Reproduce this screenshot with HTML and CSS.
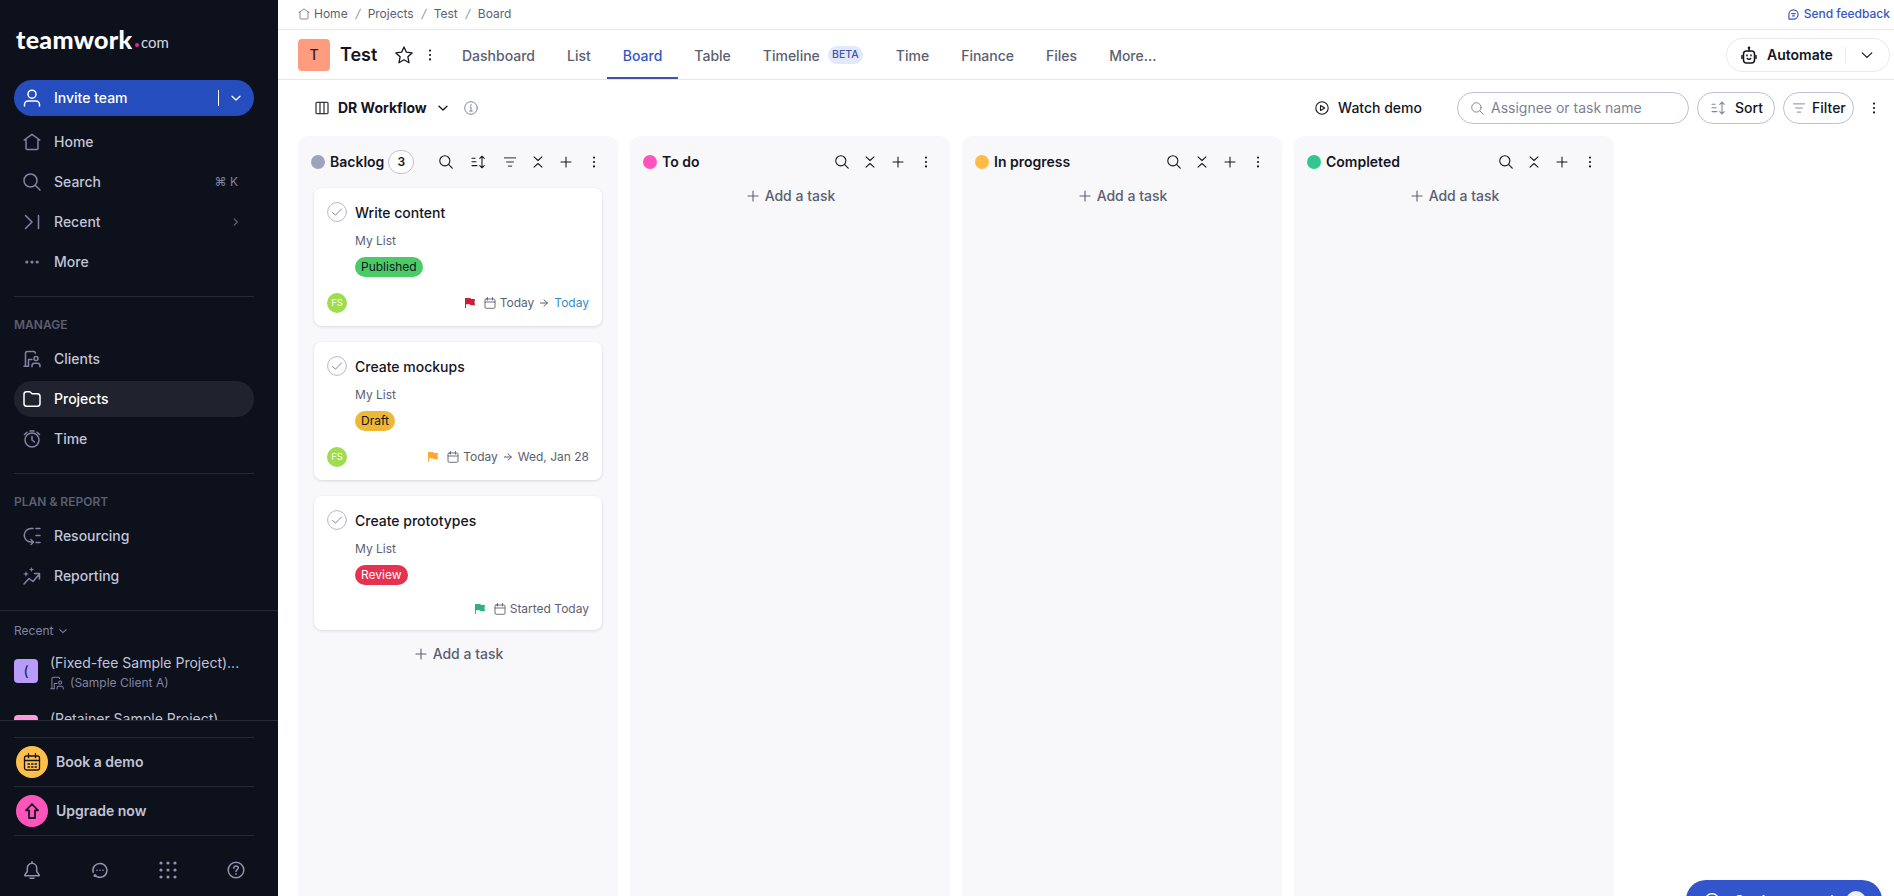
FILE: index.html
```html
<!DOCTYPE html>
<html lang="en">
<head>
<meta charset="utf-8">
<title>Test - Board</title>
<link rel="stylesheet" href="styles.css">
</head>
<body>
<svg class="sprite" aria-hidden="true">
  <symbol id="user" viewBox="0 0 18 18"><circle cx="9" cy="5.2" r="4"/><path d="M1.5 17v-1.5a3.5 3.5 0 0 1 3.5-3.500h8a3.500 3.500 0 0 1 3.500 3.500V17"/></symbol>
  <symbol id="home" viewBox="0 0 18 18"><path d="M1.200 7 9 1.300 16.800 7M3 6v9.200c0 .9.5 1.300 1.300 1.300h9.400c.8 0 1.300-.4 1.300-1.300V6"/></symbol>
  <symbol id="search" viewBox="0 0 18 18"><circle cx="7.500" cy="7.500" r="6.500"/><path d="m12.200 12.200 4.800 4.800"/></symbol>
  <symbol id="recent" viewBox="0 0 18 18"><path d="m2.500 2.500 6.500 6.500-6.500 6.500M15.500 2.500v13"/></symbol>
  <symbol id="more" viewBox="0 0 18 18"><g class="solid"><circle cx="3.800" cy="9" r="1.600"/><circle cx="9" cy="9" r="1.600"/><circle cx="14.200" cy="9" r="1.600"/></g></symbol>
  <symbol id="client" viewBox="0 0 18 18"><path d="M1 16.300h4.500V9.500h3.500M2.500 16V3.300c0-1 .8-1.800 1.800-1.800h6.200c1 0 1.800.8 1.800 1.800"/><circle cx="13" cy="8.500" r="2"/><path d="M9 16.800v-1c0-1.500 1-2.500 2.500-2.500h3c1.500 0 2.500 1 2.500 2.500v1"/></symbol>
  <symbol id="folder" viewBox="0 0 18 18"><path d="M1 4.200c0-1.500 1-2.500 2.500-2.500h2.800c.6 0 1 .2 1.300.6L9 3.700h5.200c1.600 0 2.800 1 2.800 2.600v7.200c0 1.600-1 2.800-2.700 2.800H3.700C2 16.300 1 15.200 1 13.500z"/></symbol>
  <symbol id="clock" viewBox="0 0 18 18"><circle cx="9" cy="10" r="7"/><path d="M9 6.500V10l2.500 2M7 1h4M1.500 4.500 4 2.200M16.500 4.500 14 2.200"/></symbol>
  <symbol id="resource" viewBox="0 0 18 18"><path d="M10 1.500H8a6.500 6.500 0 0 0 0 13.500h2M8 12.500l2.500 2.500L8 17.500M13 1.500h4M13 8.500h4M13 15.500h4"/></symbol>
  <symbol id="report" viewBox="0 0 18 18"><path d="m1 17 5-5.500 4 3 6.500-7.500M11.500 6.500h5V12"/><path class="solid" d="m3 4 .8 2.200L6 7l-2.200.8L3 10l-.8-2.200L0 7l2.200-.8zM8.500 0l.7 1.800L11 2.500l-1.800.7L8.500 5l-.7-1.800L6 2.500l1.800-.7z"/></symbol>
  <symbol id="down" viewBox="0 0 10 10"><path d="M1 3.200 5 7l4-3.800"/></symbol>
  <symbol id="right" viewBox="0 0 10 10"><path d="M3.500 1.500 7 5 3.500 8.500"/></symbol>
  <symbol id="calendar" viewBox="0 0 12 12"><rect x="1" y="2" width="10" height="9.300" rx="1.200"/><path d="M1 5h10M3.500.5V3M8.500.5V3"/></symbol>
  <symbol id="booking" viewBox="0 0 18 18"><rect x="1.500" y="3" width="15" height="14" rx="2"/><path d="M1.500 7.500h15M5.500.7v4M12.500.7v4"/><path stroke-dasharray="1.500 2" d="M5 11h9M5 14h9"/></symbol>
  <symbol id="upgrade" viewBox="0 0 18 18"><path d="M9 2 3 8.300h3V16h6V8.300h3z"/></symbol>
  <symbol id="bell" viewBox="0 0 18 18"><path d="M9 .8v1.500M9 2.300a4.700 4.700 0 0 0-4.700 4.700v3.500L1.800 14v.8h14.400V14l-2.500-3.500V7A4.700 4.700 0 0 0 9 2.300zM7 17.200h4"/></symbol>
  <symbol id="chat" viewBox="0 0 18 18"><path d="M4.500 14.800a7 7 0 1 0-2.300-3.500M7.300 16a7 7 0 0 0 3.500.1"/><g class="solid"><circle cx="4" cy="14.600" r="1.500"/><circle cx="6" cy="9.200" r=".8"/><circle cx="9" cy="9.200" r=".8"/><circle cx="12" cy="9.200" r=".8"/></g></symbol>
  <symbol id="apps" viewBox="0 0 18 18"><g class="solid"><circle cx="2" cy="2" r="1.600"/><circle cx="9" cy="2" r="1.600"/><circle cx="16" cy="2" r="1.600"/><circle cx="2" cy="9" r="1.600"/><circle cx="9" cy="9" r="1.600"/><circle cx="16" cy="9" r="1.600"/><circle cx="2" cy="16" r="1.600"/><circle cx="9" cy="16" r="1.600"/><circle cx="16" cy="16" r="1.600"/></g></symbol>
  <symbol id="help" viewBox="0 0 18 18"><circle cx="9" cy="9" r="7.800"/><path d="M6.800 7.200C6.800 5.800 7.700 5 9 5s2.300.8 2.300 2C11.300 8.500 9 8.800 9 10.500M9 12.700v.6"/></symbol>
  <symbol id="star" viewBox="0 0 18 18"><path d="m9 1 2.400 5.200 5.700.7-4.200 3.900 1.100 5.900L9 13.800l-5 2.900 1.100-5.900L.9 6.900l5.700-.7z"/></symbol>
  <symbol id="dots" viewBox="0 0 4 12"><g class="solid"><circle cx="2" cy="1.600" r="1.050"/><circle cx="2" cy="6" r="1.050"/><circle cx="2" cy="10.400" r="1.050"/></g></symbol>
  <symbol id="columns" viewBox="0 0 14 14"><rect x="1" y="1.300" width="12" height="11.400" rx="1"/><path d="M5 1.300v11.400M9 1.300v11.400"/></symbol>
  <symbol id="info" viewBox="0 0 14 14"><circle cx="7" cy="7" r="6.300"/><path d="M6 6h1v4M5.700 10h2.600M7 3.500v1"/></symbol>
  <symbol id="play" viewBox="0 0 14 14"><circle cx="7" cy="7" r="6.200"/><path d="M5.500 4.500v5L9.700 7z"/></symbol>
  <symbol id="feedback" viewBox="0 0 12 12"><path d="M1 11V6a5 5 0 1 1 5 5zM4 5h4M5 7.500h2"/></symbol>
  <symbol id="robot" viewBox="0 0 16 18"><rect x="2.500" y="5" width="11" height="12" rx="3"/><path d="M8 5V2M1 9.500v3M15 9.500v3M6 9v.8M10 9v.8M6.300 12.500c.8 1.100 2.600 1.100 3.400 0"/><circle class="solid" cx="8" cy="1.700" r="1.300"/></symbol>
  <symbol id="sort" viewBox="0 0 14 14"><path d="M1 3.200h3M1 6.800h4M1 10.600h5M11 1.200v11.600M8.800 3.400 11 1.200l2.200 2.200M8.800 10.600l2.200 2.200 2.200-2.200"/></symbol>
  <symbol id="filter" viewBox="0 0 14 14"><path d="M.5 2.200h13M3 7h8M5 11.800h4"/></symbol>
  <symbol id="collapse" viewBox="0 0 12 12"><path d="M2 .8 6 4.500 10 .8M2 11.200 6 7.500l4 3.700"/></symbol>
  <symbol id="plus" viewBox="0 0 12 12"><path d="M6 1v10M1 6h10"/></symbol>
  <symbol id="check" viewBox="0 0 20 20"><circle cx="10" cy="10" r="9.400"/><path class="tick" d="m5.500 10.500 3 2.600 6-6.200"/></symbol>
  <symbol id="flag" viewBox="0 0 10 10"><path class="solid" d="M0 0h5.500l.4 1H10L9.500 4l.5 3.200H5.500l-.4-1H1V10H0z"/></symbol>
  <symbol id="arrow" viewBox="0 0 8 8"><path d="M0 4h7.300M4 .8 7.300 4 4 7.200"/></symbol>
</svg>

<div class="app">
  <aside class="sidebar">
    <div class="logo"><span class="logo-name">teamwork</span><span class="logo-dot"></span><span class="logo-com">com</span></div>
    <nav class="nav">
      <a class="nav-item invite"><svg class="i18"><use href="#user"/></svg><span>Invite team</span><i class="bar"></i><svg class="i10"><use href="#down"/></svg></a>
      <a class="nav-item"><svg class="i18"><use href="#home"/></svg><span>Home</span></a>
      <a class="nav-item"><svg class="i18"><use href="#search"/></svg><span>Search</span><kbd>⌘ K</kbd></a>
      <a class="nav-item"><svg class="i18"><use href="#recent"/></svg><span>Recent</span><svg class="i10 end"><use href="#right"/></svg></a>
      <a class="nav-item"><svg class="i18"><use href="#more"/></svg><span>More</span></a>
    </nav>
    <section class="group">
      <h2>MANAGE</h2>
      <a class="nav-item"><svg class="i18"><use href="#client"/></svg><span>Clients</span></a>
      <a class="nav-item active"><svg class="i18"><use href="#folder"/></svg><span>Projects</span></a>
      <a class="nav-item"><svg class="i18"><use href="#clock"/></svg><span>Time</span></a>
    </section>
    <section class="group">
      <h2>PLAN &amp; REPORT</h2>
      <a class="nav-item"><svg class="i18"><use href="#resource"/></svg><span>Resourcing</span></a>
      <a class="nav-item"><svg class="i18"><use href="#report"/></svg><span>Reporting</span></a>
    </section>
    <section class="recents">
      <div class="recents-title"><span>Recent</span><svg class="i8"><use href="#down"/></svg></div>
      <div class="recent-item"><b class="tile violet">(</b><div><div class="project">(Fixed-fee Sample Project)...</div><div class="client"><svg class="i14"><use href="#client"/></svg><span>(Sample Client A)</span></div></div></div>
      <div class="recent-item"><b class="tile rose"></b><div><div class="project">(Retainer Sample Project)</div></div></div>
    </section>
    <div class="promos">
      <a class="promo"><b class="disc amber"><svg class="i18"><use href="#booking"/></svg></b><span>Book a demo</span></a>
      <a class="promo"><b class="disc pink"><svg class="i18"><use href="#upgrade"/></svg></b><span>Upgrade now</span></a>
    </div>
    <div class="tools"><svg class="i18"><use href="#bell"/></svg><svg class="i18"><use href="#chat"/></svg><svg class="i18"><use href="#apps"/></svg><svg class="i18"><use href="#help"/></svg></div>
  </aside>

  <main class="main">
    <div class="crumbs">
      <svg class="i12"><use href="#home"/></svg><span>Home</span><i>/</i><span>Projects</span><i>/</i><span>Test</span><i>/</i><span>Board</span>
      <a class="feedback"><svg class="i11"><use href="#feedback"/></svg><span>Send feedback</span></a>
    </div>
    <header class="header">
      <b class="avatar">T</b>
      <h1>Test</h1>
      <svg class="i18 star"><use href="#star"/></svg>
      <svg class="dots"><use href="#dots"/></svg>
      <nav class="tabs">
        <a>Dashboard</a><a>List</a><a class="current">Board</a><a>Table</a><a class="timeline">Timeline<em>BETA</em></a><a>Time</a><a>Finance</a><a>Files</a><a>More...</a>
      </nav>
      <div class="automate"><svg class="robot"><use href="#robot"/></svg><span>Automate</span><i></i><svg class="i12"><use href="#down"/></svg></div>
    </header>
    <div class="toolbar">
      <svg class="i14 view"><use href="#columns"/></svg><strong>DR Workflow</strong><svg class="i10 dark"><use href="#down"/></svg><svg class="i14 info"><use href="#info"/></svg>
      <div class="watch"><svg class="i14"><use href="#play"/></svg><span>Watch demo</span></div>
      <div class="field"><svg class="i13"><use href="#search"/></svg><span>Assignee or task name</span></div>
      <div class="pill sort"><svg class="i14"><use href="#sort"/></svg><span>Sort</span></div>
      <div class="pill filter"><svg class="i12"><use href="#filter"/></svg><span>Filter</span></div>
      <svg class="dots"><use href="#dots"/></svg>
    </div>

    <div class="board">
      <section class="column">
        <div class="column-head"><i class="dot slate"></i><h3>Backlog</h3><span class="count">3</span>
          <div class="actions"><svg class="i14 a-search"><use href="#search"/></svg><svg class="i14 a-sort"><use href="#sort"/></svg><svg class="i12 a-filter"><use href="#filter"/></svg><svg class="i12"><use href="#collapse"/></svg><svg class="i12"><use href="#plus"/></svg><svg class="i12"><use href="#dots"/></svg></div>
        </div>
        <article class="card">
          <svg class="check"><use href="#check"/></svg>
          <div class="card-body"><h4>Write content</h4><div class="list">My List</div><span class="tag green">Published</span></div>
          <footer><b class="person">FS</b><div class="dates"><svg class="flag red"><use href="#flag"/></svg><svg class="i12"><use href="#calendar"/></svg><span>Today</span><svg class="arrow"><use href="#arrow"/></svg><span class="due">Today</span></div></footer>
        </article>
        <article class="card">
          <svg class="check"><use href="#check"/></svg>
          <div class="card-body"><h4>Create mockups</h4><div class="list">My List</div><span class="tag yellow">Draft</span></div>
          <footer><b class="person">FS</b><div class="dates"><svg class="flag orange"><use href="#flag"/></svg><svg class="i12"><use href="#calendar"/></svg><span>Today</span><svg class="arrow"><use href="#arrow"/></svg><span>Wed, Jan 28</span></div></footer>
        </article>
        <article class="card short">
          <svg class="check"><use href="#check"/></svg>
          <div class="card-body"><h4>Create prototypes</h4><div class="list">My List</div><span class="tag crimson">Review</span></div>
          <footer><div class="dates"><svg class="flag teal"><use href="#flag"/></svg><svg class="i12"><use href="#calendar"/></svg><span>Started Today</span></div></footer>
        </article>
        <div class="add"><svg class="i12"><use href="#plus"/></svg><span>Add a task</span></div>
      </section>
      <section class="column">
        <div class="column-head"><i class="dot magenta"></i><h3>To do</h3><div class="actions"><svg class="i14"><use href="#search"/></svg><svg class="i12"><use href="#collapse"/></svg><svg class="i12"><use href="#plus"/></svg><svg class="i12"><use href="#dots"/></svg></div></div>
        <div class="add"><svg class="i12"><use href="#plus"/></svg><span>Add a task</span></div>
      </section>
      <section class="column">
        <div class="column-head"><i class="dot gold"></i><h3>In progress</h3><div class="actions"><svg class="i14"><use href="#search"/></svg><svg class="i12"><use href="#collapse"/></svg><svg class="i12"><use href="#plus"/></svg><svg class="i12"><use href="#dots"/></svg></div></div>
        <div class="add"><svg class="i12"><use href="#plus"/></svg><span>Add a task</span></div>
      </section>
      <section class="column">
        <div class="column-head"><i class="dot mint"></i><h3>Completed</h3><div class="actions"><svg class="i14"><use href="#search"/></svg><svg class="i12"><use href="#collapse"/></svg><svg class="i12"><use href="#plus"/></svg><svg class="i12"><use href="#dots"/></svg></div></div>
        <div class="add"><svg class="i12"><use href="#plus"/></svg><span>Add a task</span></div>
      </section>
    </div>
  </main>
  <div class="getting-started"><svg class="i16"><use href="#info"/></svg><span>Getting started</span><b>8</b></div>
</div>
</body>
</html>
```

FILE: styles.css
```css
* { box-sizing: border-box; }
body { margin: 0; font: 500 14px/20px Inter, "Noto Sans", sans-serif; color: #14151f; background: #fff; overflow: hidden; }
h1, h2, h3, h4 { margin: 0; }
i, em { font-style: normal; }
svg { display: block; flex: none; fill: none; stroke: currentColor; stroke-width: 1.3; stroke-linecap: round; stroke-linejoin: round; }
.solid { fill: currentColor; stroke: none; }
.sprite { position: absolute; width: 0; height: 0; }
.i8 { width: 8px; height: 8px; }
.i10 { width: 10px; height: 10px; }
.i11 { width: 11px; height: 11px; }
.i12 { width: 12px; height: 12px; }
.i13 { width: 13px; height: 13px; }
.i14 { width: 14px; height: 14px; }
.i16 { width: 16px; height: 16px; }
.i18 { width: 18px; height: 18px; }
.dots { width: 4px; height: 12px; }

.app { display: flex; height: 896px; position: relative; overflow: hidden; white-space: nowrap; }

/* Sidebar */
.sidebar { width: 278px; flex: none; display: flex; flex-direction: column; background: #0d111c; color: #c2c4d8; }
.logo { height: 80px; padding: 24px 0 0 16px; display: flex; color: #fff; }
.logo-name { font: 900 25px/30px Lato, sans-serif; letter-spacing: .3px; width: 118px; }
.logo-dot { width: 4px; height: 4px; border-radius: 50%; background: #e5269b; margin: 19px 2px 0 1px; }
.logo-com { font: 400 15px/20px Lato, sans-serif; margin-top: 8px; color: #d5d7e4; }
.nav { padding: 0 24px 0 14px; display: flex; flex-direction: column; gap: 4px; height: 216px; flex: none; }
.nav-item { display: flex; align-items: center; height: 36px; padding: 0 16px 0 9px; border-radius: 18px; flex: none; }
.nav-item > svg:first-child { color: #8184a3; margin-right: 13px; stroke-width: 1.5; }
.nav-item.invite { background: #254dbd; color: #fff; padding-right: 13px; margin-bottom: 4px; }
.nav-item.invite > svg:first-child { color: #fff; }
.bar { width: 1px; height: 16px; background: #fff; margin: 0 12px 0 auto; }
.nav-item kbd { font: 400 12px/16px Inter, "DejaVu Sans", sans-serif; color: #8184a3; margin-left: auto; }
.nav-item .end { margin-left: auto; margin-right: -2px; width: 9px; color: #62657c; }
.nav-item.active { background: #20222d; color: #fff; }
.nav-item.active > svg:first-child { color: #fff; }
.group { margin: 0 24px 0 14px; border-top: 1px solid #272a35; padding-top: 19px; display: flex; flex-direction: column; gap: 4px; height: 177px; flex: none; }
.group + .group { height: 137px; }
.group h2 { font: 600 12px/18px Inter, sans-serif; color: #5c5f70; margin-bottom: 3px; }
.recents { border-top: 1px solid #272a35; height: 110px; overflow: hidden; padding: 11px 14px 0; flex: none; font-weight: 400; }
.recents-title { display: flex; gap: 6px; align-items: center; font-size: 12px; line-height: 18px; color: #8184a3; margin-bottom: 13px; }
.recent-item { display: flex; gap: 12px; margin-bottom: 12px; height: 44px; }
.tile { width: 24px; height: 24px; border-radius: 4px; margin-top: 6px; text-align: center; font: 400 14px/24px Inter, sans-serif; color: #14151f; }
.violet { background: #b89cfa; }
.rose { background: #fc9ade; }
.project { line-height: 20px; }
.client { display: flex; align-items: center; gap: 6px; font-size: 12px; line-height: 20px; color: #8184a3; }
.promos { border-top: 1px solid #272a35; padding: 16px 24px 0 14px; }
.promo { border-top: 1px solid #272a35; height: 49px; display: flex; align-items: center; gap: 8px; padding-left: 2px; font-weight: 600; }
.promo:last-child { border-bottom: 1px solid #272a35; height: 50px; }
.disc { width: 32px; height: 32px; border-radius: 50%; display: grid; place-items: center; color: #14151f; }
.amber { background: #ffbf4a; }
.pink { background: #ff54bb; }
.pink svg { stroke-width: 1.8; }
.tools { display: flex; justify-content: space-between; padding: 25px 33px 0 23px; color: #8f92b0; }
.tools svg { stroke-width: 1.5; }

/* Page header */
.main { flex: 1; min-width: 0; display: flex; flex-direction: column; }
.crumbs { height: 30px; border-bottom: 1px solid #e6e6ea; display: flex; align-items: center; padding: 0 4px 1px 20px; font-weight: 400; font-size: 12px; line-height: 18px; color: #5c5f70; }
.crumbs > .i12 { margin-right: 4px; color: #75778a; }
.crumbs > i { width: 20px; text-align: center; color: #8e90a0; transform: skewX(-12deg); }
.feedback { margin-left: auto; display: flex; align-items: center; gap: 5px; color: #3558c0; font-weight: 500; }
.header { height: 50px; border-bottom: 1px solid #e6e6ea; display: flex; align-items: center; padding: 0 4px 0 20px; }
.avatar { width: 32px; height: 32px; border-radius: 4px; background: #ff9c80; text-align: center; font: 500 14px/32px Inter, sans-serif; color: #2b2027; margin-right: 10px; }
h1 { font: 600 18px/24px Inter, sans-serif; width: 55px; }
.header > .dots { margin: 0 14px 0 15px; }
.tabs { display: flex; align-self: stretch; color: #5c5f70; }
.tabs a { padding: 16px 16px 0; height: 50px; }
.tabs .current { color: #3558c0; border-bottom: 2px solid #3d55ac; height: 49px; }
.timeline { display: flex; gap: 8px; }
.timeline em { height: 18px; border-radius: 9px; background: #e3e9fc; color: #3d55ac; font-size: 10.500px; line-height: 18px; width: 35px; text-align: center; }
.tabs .timeline { padding-right: 17px; }
.automate { margin-left: auto; width: 164px; height: 34px; border: 1px solid #e9e9ef; border-radius: 17px; display: flex; align-items: center; padding: 0 16px 0 14px; font-weight: 600; }
.robot { width: 16px; height: 18px; margin-right: 10px; stroke-width: 1.5; }
.automate i { width: 1px; height: 16px; background: #e9e9ef; margin: 0 15px 0 auto; }
.automate .i12 { stroke-width: 1; }
.toolbar { height: 56px; flex: none; display: flex; align-items: center; padding: 0 18px 0 37px; }
.toolbar strong { font-weight: 700; width: 99px; margin-left: 9px; }
.view { color: #3a3c4a; }
.dark { margin-left: 1px; }
.info { margin-left: 16px; color: #8184a3; stroke-width: 1; }
.watch { margin-left: auto; display: flex; align-items: center; gap: 9px; margin-right: 35px; }
.watch svg { stroke-width: 1.1; }
.field { width: 232px; height: 32px; border: 1px solid #bfc0d6; border-radius: 16px; display: flex; align-items: center; gap: 7px; padding-left: 13px; color: #7d7f96; font-weight: 400; margin-right: 8px; }
.pill { height: 32px; border: 1px solid #bfc0d6; border-radius: 16px; display: flex; align-items: center; margin-right: 8px; }
.pill svg { color: #8184a3; stroke-width: 1.1; }
.sort { width: 78px; padding-left: 13px; gap: 10px; }
.filter { width: 71px; padding-left: 9px; gap: 7px; margin-right: 18px; }

/* Board */
.board { flex: 1; display: flex; gap: 12px; padding-left: 20px; }
.column { width: 320px; background: #f8f8fb; border-radius: 10px 10px 0 0; padding: 0 16px; }
.column-head { height: 52px; display: flex; align-items: center; margin: 0 -3px; }
.dot { width: 14px; height: 14px; border-radius: 50%; }
.slate { background: #9ea2bd; }
.magenta { background: #ff54bb; }
.gold { background: #ffbb45; }
.mint { background: #34c690; }
h3 { font: 600 14px/20px Inter, sans-serif; margin-left: 5px; }
.count { width: 26px; height: 24px; border: 1px solid #bfc0d6; border-radius: 12px; background: #fff; margin-left: 4px; text-align: center; font-size: 12px; line-height: 22px; font-weight: 600; }
.actions { margin-left: auto; display: flex; align-items: center; gap: 16px; padding-right: 5px; }
.actions svg { stroke-width: 1.050; }
.actions .i14:not(.a-sort) { stroke-width: 1.400; }
.actions .i14 { margin-right: -1px; }
.actions .a-search { margin-right: 2px; }
.actions .a-sort { margin-right: 3px; }
.card { position: relative; height: 138px; margin-bottom: 16px; border-radius: 8px; background: #fff; box-shadow: 0 1px 3px rgba(20, 21, 40, .14); display: grid; grid-template-columns: 20px 1fr; column-gap: 8px; padding: 14px 13px 0; grid-template-rows: 91px 20px; }
.card.short { height: 134px; grid-template-rows: 89px 20px; }
.check { width: 20px; height: 20px; color: #b4b5d0; stroke-width: 1; }
.tick { stroke: #8184a3; }
h4 { font: 500 14px/22px Inter, sans-serif; }
.list { font-weight: 400; font-size: 12px; line-height: 18px; margin: 8px 0 7px; color: #5c5f70; }
.tag { display: inline-block; height: 20px; border-radius: 10px; padding: 0 6px; font-weight: 400; font-size: 12px; line-height: 20px; vertical-align: top; }
.green { background: #4acb68; }
.yellow { background: #edb737; }
.crimson { background: #e8304f; color: #fff; }
.card footer { grid-column: 1 / 3; display: flex; align-items: center; font-weight: 400; font-size: 12px; color: #5c5f70; }
.person { width: 20px; height: 20px; border-radius: 50%; background: #a0dc50; color: #fff; font: 400 9.5px/20px Inter, sans-serif; text-align: center; }
.dates { margin-left: auto; display: flex; align-items: center; }
.dates .i12 { margin: 0 4px 0 9px; stroke-width: .9; }
.flag { width: 10px; height: 10px; }
.red { color: #c71f33; }
.orange { color: #ffa72e; }
.teal { color: #2faf82; }
.arrow { width: 8px; height: 8px; margin: 0 6px; stroke-width: 1; }
.due { color: #378cc8; }
.add { height: 16px; display: flex; align-items: center; justify-content: center; gap: 6px; padding-left: 2px; color: #5c5f70; }
.add svg { stroke-width: 1.100; }

.getting-started { position: absolute; left: 1686px; top: 880px; width: 196px; height: 40px; border-radius: 20px; background: #3355cb; color: #fff; display: flex; align-items: center; padding: 1px 16px 0 18px; }
.getting-started span { margin-left: 14px; }
.getting-started b { width: 20px; height: 20px; border-radius: 50%; background: #eef0fb; color: #14151f; font-size: 12px; font-weight: 600; text-align: center; margin-left: auto; }
```
